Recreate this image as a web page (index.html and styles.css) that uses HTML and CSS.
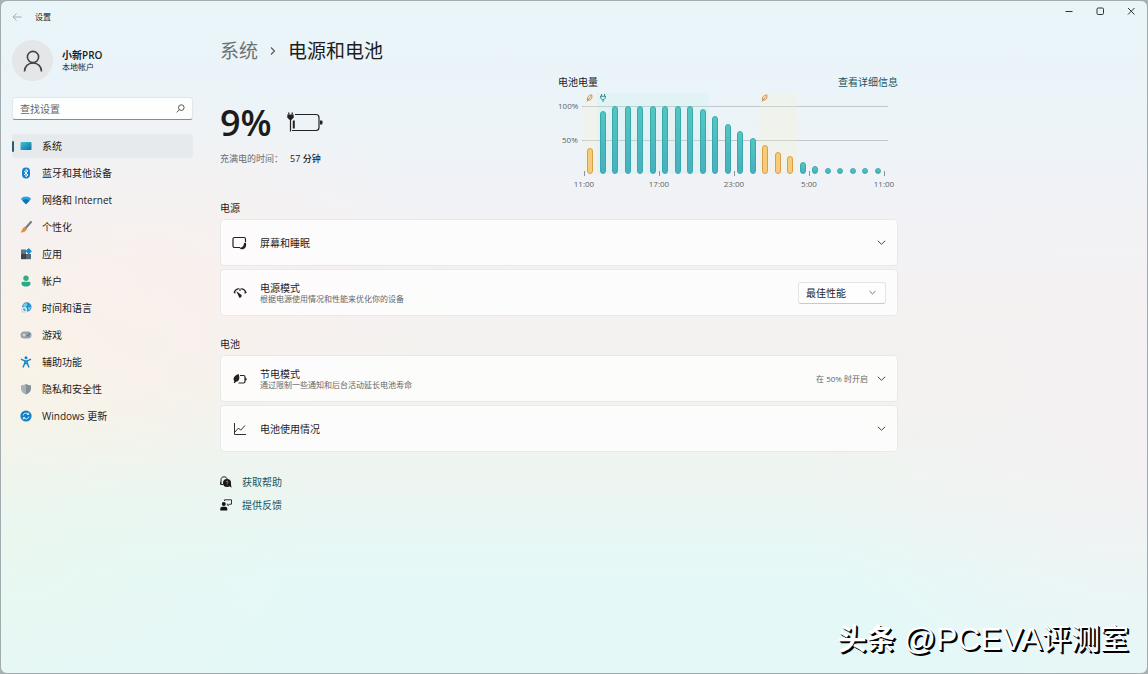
FILE: index.html
```html
<!DOCTYPE html>
<html lang="zh-CN">
<head>
<meta charset="utf-8">
<meta name="viewport" content="width=device-width, initial-scale=1">
<title>设置</title>
<link rel="stylesheet" href="styles.css">
</head>
<body>
<div class="window">
  <header class="titlebar">
    <button class="back" type="button" aria-label="返回"><svg width="10" height="10" viewBox="0 0 10 10" fill="none" stroke="currentColor"><path d="M9.5 5H1M4.5 1.5L1 5l3.5 3.5"/></svg></button>
    <span class="app-name">设置</span>
    <div class="caption">
      <button type="button" aria-label="最小化"><svg width="8" height="8" viewBox="0 0 8 8" fill="none" stroke="currentColor"><path d="M.5 4.5h7"/></svg></button>
      <button type="button" aria-label="最大化"><svg width="8" height="8" viewBox="0 0 8 8" fill="none" stroke="currentColor"><rect x="1" y="1" width="6.5" height="6.5" rx="1.2"/></svg></button>
      <button type="button" aria-label="关闭"><svg width="8" height="8" viewBox="0 0 8 8" fill="none" stroke="currentColor"><path d="M1 1l6.5 6.5M7.5 1L1 7.5"/></svg></button>
    </div>
  </header>

  <div class="body">
    <aside class="sidebar">
      <div class="account">
        <span class="avatar"><svg width="20" height="22" viewBox="0 0 20 22" fill="none" stroke="#444" stroke-width="1.6"><circle cx="10" cy="7" r="5.6"/><path d="M1.5 21.5c0-5 3.5-8.5 8.500-8.500s8.500 3.500 8.500 8.500"/></svg></span>
        <div class="account-text">
          <strong>小新PRO</strong>
          <span>本地帐户</span>
        </div>
      </div>
      <label class="search">
        <input type="search" placeholder="查找设置" aria-label="查找设置">
        <svg width="9" height="9" viewBox="0 0 9 9" fill="none" stroke="#555"><circle cx="5.300" cy="3.600" r="2.800"/><path d="M3.300 5.700L.7 8.400"/></svg>
      </label>
      <nav class="nav">
        <a class="nav-item active" href="#system"><svg width="12" height="12" viewBox="0 0 12 12"><defs><linearGradient id="gs" x1="0" y1="0" x2="1" y2="1"><stop offset="0" stop-color="#3cc6dc"/><stop offset="1" stop-color="#126ca0"/></linearGradient></defs><rect x=".5" y="2" width="11" height="8" rx="1" fill="url(#gs)"/></svg>系统</a>
        <a class="nav-item" href="#bluetooth"><svg width="12" height="12" viewBox="0 0 12 12"><rect x="2" y=".5" width="8" height="11" rx="4" fill="#1580cc"/><path d="M4 4l4 4-2 1.800V2.200L8 4 4 8" fill="none" stroke="#fff" stroke-width=".9"/></svg>蓝牙和其他设备</a>
        <a class="nav-item" href="#network"><svg width="12" height="12" viewBox="0 0 12 12"><path d="M6 10.300L.8 5C3.700 1.800 8.300 1.800 11.200 5z" fill="#25a6dd"/><path d="M6 10.300L2.500 6.700C4.500 4.800 7.500 4.800 9.500 6.700z" fill="#126fb1"/></svg>网络和 Internet</a>
        <a class="nav-item" href="#personal"><svg width="12" height="12" viewBox="0 0 12 12"><path d="M11 1L5.700 7" stroke="#6d7c88" stroke-width="2" stroke-linecap="round"/><path d="M4.800 5.700l2.200 2c-.8 2.500-3 4-6.500 3.800C2.300 9.800 2 6.800 4.800 5.700z" fill="#e0903c"/></svg>个性化</a>
        <a class="nav-item" href="#apps"><svg width="12" height="12" viewBox="0 0 12 12"><path d="M1 1.500h5V6H1z" fill="#65737e"/><path d="M1 6h5v5.200H1z" fill="#384651"/><path d="M6 6h5v5.200H6z" fill="#5a6873"/><path d="M8.700.5l2.700 2.700-2.700 2.700L6 3.200z" fill="#178bd2" stroke="#178bd2"/></svg>应用</a>
        <a class="nav-item" href="#accounts"><svg width="12" height="12" viewBox="0 0 12 12"><circle cx="6" cy="3.200" r="2.700" fill="#2fae83"/><path d="M1.500 8a1.300 1.300 0 011.300-1.300h6.400A1.300 1.300 0 0110.500 8v.8c0 1.900-2 2.800-4.500 2.800s-4.500-.9-4.500-2.800z" fill="#2aa88a"/></svg>帐户</a>
        <a class="nav-item" href="#time"><svg width="12" height="12" viewBox="0 0 12 12"><circle cx="6.800" cy="5" r="4.700" fill="#2391cf"/><path d="M3 3l3-2.200 1.500 2L5 5.500zM8 5l3 .5-2 3.300z" fill="#72d2ec"/><circle cx="4" cy="8" r="3.200" fill="#d9e4ec"/><path d="M4 6.300v1.900h1.500" stroke="#39749e" fill="none"/></svg>时间和语言</a>
        <a class="nav-item" href="#gaming"><svg width="12" height="12" viewBox="0 0 12 12"><rect x=".5" y="2.500" width="11" height="7" rx="3.500" fill="#98a2ab"/><path d="M2.500 6h3M4 4.500v3" stroke="#dfe4e8"/><circle cx="7.700" cy="6.700" r=".8" fill="#4c5966"/><circle cx="9.200" cy="5.200" r=".8" fill="#4c5966"/></svg>游戏</a>
        <a class="nav-item" href="#access"><svg width="12" height="12" viewBox="0 0 12 12"><circle cx="6" cy="1.800" r="1.500" fill="#1384c5"/><path d="M1.500 3.300L4.800 5v2L3.200 11M10.500 3.300L7.200 5v2l1.600 4M5 5h2v2.500H5z" fill="none" stroke="#1384c5" stroke-width="1.400" stroke-linecap="round"/></svg>辅助功能</a>
        <a class="nav-item" href="#privacy"><svg width="12" height="12" viewBox="0 0 12 12"><path d="M6 .7c1.500 1 3 1.500 5 1.500v3.500c0 2.800-2.200 4.700-5 5.800z" fill="#858f98"/><path d="M6 .7C4.500 1.700 3 2.200 1 2.200v3.500c0 2.800 2.200 4.700 5 5.800z" fill="#a8b0b7"/></svg>隐私和安全性</a>
        <a class="nav-item" href="#update"><svg width="12" height="12" viewBox="0 0 12 12"><circle cx="6" cy="6" r="5.600" fill="#147fc5"/><path d="M3 5.500a3 3 0 015.300-1.300M9 6.500a3 3 0 01-5.300 1.300M8.700 2.500v2H6.800M3.300 9.500v-2h1.900" fill="none" stroke="#d9f3ff" stroke-width=".9"/></svg>Windows 更新</a>
      </nav>
    </aside>

    <main class="main">
      <h1 class="crumbs"><a href="#system">系统</a><svg width="6" height="10" viewBox="0 0 6 10" fill="none" stroke="#555" stroke-width="1.100"><path d="M1 1.500L4.500 5 1 8.500"/></svg><span>电源和电池</span></h1>

      <section class="hero">
        <div class="status">
          <div class="level"><span>9%</span>
            <svg width="36" height="22" viewBox="0 0 36 22"><path d="M8 2.500h21a3 3 0 013 3v10a3 3 0 01-3 3H5" fill="none" stroke="#222" stroke-width="1.200"/><path d="M33 8.500h1.500a1 1 0 011 1v2a1 1 0 01-1 1H33z" fill="#222"/><path d="M1.800.5v2M5.200.5v2" stroke="#222" stroke-width="1.300"/><path d="M.3 2.500h6.400v2.700L4.800 7.700H2.200L.3 5.200z" fill="#222"/><path d="M3.500 7v12.500" stroke="#222" stroke-width="1.200"/><path d="M5.800 8.500h2v8h-2z" fill="#222"/></svg>
          </div>
          <p class="remaining">充满电的时间：<b>57 分钟</b></p>
        </div>
        <div class="chart">
          <div class="chart-head"><span>电池电量</span><a href="#details">查看详细信息</a></div>
          <div class="plot">
            <span class="grid-line full">100%</span>
            <span class="grid-line half">50%</span>
            <div class="bars">
              <div class="slot saver"><svg class="mark" width="8" height="8" viewBox="0 0 8 8" fill="none" stroke="#c87f35" stroke-width=".9"><path d="M1 7.500l1-1.700M1.800 6C.5 3 3 1.500 5.700.8c.6 2.800.2 5.600-3.900 5.200L5 2.500"/></svg><i style="height:38%"></i></div>
              <div class="slot charge"><svg class="mark" width="8" height="8" viewBox="0 0 8 8" fill="none" stroke="#23858d" stroke-width=".9"><path d="M2.500 0v2M5.500 0v2M1 2.300h6M1.700 2.500v1.800L4 6l2.300-1.700V2.500M4 6v2"/></svg><i style="height:93%"></i></div>
              <div class="slot charge"><i style="height:100%"></i></div>
              <div class="slot charge"><i style="height:100%"></i></div>
              <div class="slot charge"><i style="height:100%"></i></div>
              <div class="slot charge"><i style="height:100%"></i></div>
              <div class="slot charge"><i style="height:100%"></i></div>
              <div class="slot charge"><i style="height:100%"></i></div>
              <div class="slot charge"><i style="height:100%"></i></div>
              <div class="slot charge"><i style="height:96%"></i></div>
              <div class="slot"><i style="height:85%"></i></div>
              <div class="slot"><i style="height:73%"></i></div>
              <div class="slot"><i style="height:63%"></i></div>
              <div class="slot"><i style="height:53%"></i></div>
              <div class="slot saver"><svg class="mark" width="8" height="8" viewBox="0 0 8 8" fill="none" stroke="#c87f35" stroke-width=".9"><path d="M1 7.500l1-1.700M1.800 6C.5 3 3 1.500 5.700.8c.6 2.800.2 5.600-3.900 5.200L5 2.500"/></svg><i style="height:42%"></i></div>
              <div class="slot saver"><i style="height:33%"></i></div>
              <div class="slot saver"><i style="height:27%"></i></div>
              <div class="slot"><i style="height:18%"></i></div>
              <div class="slot"><i style="height:12%"></i></div>
              <div class="slot"><i style="height:9%"></i></div>
              <div class="slot"><i style="height:9%"></i></div>
              <div class="slot"><i style="height:9%"></i></div>
              <div class="slot"><i style="height:9%"></i></div>
              <div class="slot"><i style="height:9%"></i></div>
            </div>
          </div>
          <div class="hours"><span>11:00</span><span>17:00</span><span>23:00</span><span>5:00</span><span>11:00</span></div>
        </div>
      </section>

      <section class="group">
        <h2>电源</h2>
        <button class="card" type="button">
          <svg class="card-icon" width="16" height="16" viewBox="0 0 16 16"><path d="M8 12.500H2.500A1.500 1.500 0 011 11V4a1.500 1.500 0 011.500-1.500H12A1.500 1.500 0 0113.500 4v3" fill="none" stroke="#222" stroke-width="1.200"/><path d="M13.800 7.500c1.200 3.500-.5 6.800-3.800 6.800-1.300 0-2.200-.6-2.700-1.500 3-.1 4.700-1.600 4.700-4.800z" fill="#222"/></svg>
          <span class="card-text">屏幕和睡眠</span>
          <svg class="chev" width="9" height="9" viewBox="0 0 9 9"><path d="M.8 2.700l3.700 3.600 3.700-3.600"/></svg>
        </button>
        <div class="card">
          <svg class="card-icon" width="16" height="16" viewBox="0 0 16 16"><path d="M2 7.500C3.200 5 5 3.900 6.800 3.700M9.200 3.700c2 .3 3.800 1.500 4.800 3.800l-1.600.6M2 7.500l1.500.6M8 3.500V6" fill="none" stroke="#222" stroke-width="1.200"/><path d="M4.300 5.900l5.200 4.200a1.700 1.700 0 01-2.300 2.300z" fill="#222"/></svg>
          <label class="card-text" for="mode">电源模式<small>根据电源使用情况和性能来优化你的设备</small></label>
          <span class="picker"><select id="mode"><option>最佳性能</option><option>平衡</option><option>最佳能效</option></select><svg class="chev" width="7" height="7" viewBox="0 0 9 9"><path d="M.8 2.700l3.700 3.600 3.700-3.600"/></svg></span>
        </div>
      </section>

      <section class="group">
        <h2>电池</h2>
        <button class="card" type="button">
          <svg class="card-icon" width="16" height="16" viewBox="0 0 16 16"><path d="M8 4.500h3.500A1.500 1.500 0 0113 6v4.500a1.500 1.500 0 01-1.500 1.500H6.500M14 7.300v2" fill="none" stroke="#222" stroke-width="1.200"/><path d="M6.700 3C8 7 7.500 10.700 4 10.700l-1.300 1.500-1-.7.600-1.200C.2 7 2.800 4.300 6.700 3z" fill="#222"/></svg>
          <span class="card-text">节电模式<small>通过限制一些通知和后台活动延长电池寿命</small></span>
          <span class="value">在 50% 时开启</span>
          <svg class="chev" width="9" height="9" viewBox="0 0 9 9"><path d="M.8 2.700l3.700 3.600 3.700-3.600"/></svg>
        </button>
        <button class="card" type="button">
          <svg class="card-icon" width="16" height="16" viewBox="0 0 16 16" fill="none" stroke="#333"><path d="M2.500 2v11.500H14M3 11l3.500-4 2.200 2.200L13 4.500"/></svg>
          <span class="card-text">电池使用情况</span>
          <svg class="chev" width="9" height="9" viewBox="0 0 9 9"><path d="M.8 2.700l3.700 3.600 3.700-3.600"/></svg>
        </button>
      </section>

      <div class="links">
        <a href="#help"><svg width="12" height="12" viewBox="0 0 12 12"><path d="M1 8.300V3.800C1 1.800 2.300.8 4 .8s3 .8 3 2.500M.6 6v2.500H3" fill="none" stroke="#222"/><circle cx="7" cy="7" r="4" fill="#151515"/><path d="M8 9l3.500 2.700L10.800 7z" fill="#151515"/><path d="M5.900 6c.2-1.300 2.300-1.200 2.200.1 0 .8-1.100.8-1.100 1.700M7 8.500v.8" fill="none" stroke="#bbb" stroke-width=".7"/></svg>获取帮助</a>
        <a href="#feedback"><svg width="12" height="12" viewBox="0 0 12 12"><circle cx="3.800" cy="5" r="2" fill="#151515"/><path d="M.3 11.500V9.800c0-1.300.8-2 2-2h3c1.200 0 2 .7 2 2v1.700z" fill="#151515"/><path d="M4.500 2V.8h7v4.400H9.500L8 6.800V5.200H6.800" fill="none" stroke="#333"/></svg>提供反馈</a>
      </div>
    </main>
  </div>

  <div class="watermark"><b>头条</b><span><span class="latin">@PCEVA</span>评测室</span></div>
</div>
</body>
</html>
```

FILE: styles.css
```css
* { box-sizing: border-box; }

body {
  margin: 0;
  background: #a9b0b2;
  color: #1c1c1c;
  font: 10px/12px "Open Sans", "Noto Sans CJK SC", sans-serif;
}

a { color: inherit; text-decoration: none; }
button, input, select { font: inherit; color: inherit; }
svg { flex: none; }

.window {
  position: relative;
  display: flex;
  flex-direction: column;
  min-height: 100vh;
  border: 1px solid #a3adb0;
  border-radius: 7px;
  background:
    radial-gradient(ellipse 26% 30% at 13% 42%, rgba(250, 240, 235, .8), rgba(250, 240, 235, 0)),
    radial-gradient(ellipse 22% 22% at 0% 54%, rgba(249, 244, 228, .9), rgba(249, 244, 228, 0)),
    radial-gradient(ellipse 28% 28% at 0% 82%, rgba(234, 247, 238, .8), rgba(234, 247, 238, 0)),
    radial-gradient(ellipse 30% 40% at 100% 66%, rgba(244, 241, 243, 1), rgba(244, 241, 243, 0)),
    linear-gradient(#e9f5f8 0%, #ebf4f8 15%, #f1f2f6 30%, #f4f1f1 46%, #f3f2ee 58%, #edf5f1 72%, #e4f9f7 86%, #e4f8f7 100%);
}

/* Title bar */
.titlebar { display: flex; align-items: center; height: 32px; padding: 0 1px 0 8px; }
.back, .caption button {
  display: grid;
  place-items: center;
  padding: 0;
  border: 0;
  background: none;
}
.back { width: 16px; height: 16px; color: #a4abae; }
.app-name { margin-left: 10px; font-size: 8px; }
.caption { display: flex; align-self: flex-start; margin-left: auto; }
.caption button { width: 31px; height: 20px; color: #333; }

.body { display: flex; gap: 27px; padding-left: 11px; }

/* Sidebar */
.sidebar { flex: none; width: 181px; padding-top: 7px; }
.account { display: flex; align-items: center; gap: 9px; }
.avatar {
  display: grid;
  place-items: center;
  width: 41px;
  height: 41px;
  border-radius: 50%;
  background: #e4e6e7;
}
.account-text { display: flex; flex-direction: column; font-size: 8px; line-height: 11px; }
.account-text strong { font-size: 10px; font-weight: 600; }
.search {
  display: flex;
  align-items: center;
  height: 23px;
  margin-top: 16px;
  padding: 0 7px;
  border: 1px solid #e2e8ea;
  border-bottom-color: #868c8e;
  border-radius: 3px;
  background: #fdfefe;
}
.search input {
  flex: 1;
  min-width: 0;
  padding: 0;
  border: 0;
  outline: 0;
  background: none;
  appearance: none;
}
.search input::placeholder { color: #666; opacity: 1; }
.nav { display: flex; flex-direction: column; gap: 3px; margin-top: 14px; }
.nav-item {
  position: relative;
  display: flex;
  align-items: center;
  gap: 10px;
  height: 24px;
  padding-left: 8px;
  border-radius: 3px;
}
.nav-item.active { background: #e7eaec; }
.nav-item.active::before {
  content: "";
  position: absolute;
  left: 0;
  width: 2px;
  height: 11px;
  border-radius: 1px;
  background: #225f70;
}

/* Main column */
.main { flex: 0 1 678px; min-width: 0; padding-top: 6px; }
.crumbs {
  display: flex;
  align-items: center;
  gap: 12px;
  margin: 0;
  font-size: 19px;
  line-height: 24px;
  font-weight: 400;
}
.crumbs a { color: #6b7275; }

.hero { display: flex; justify-content: space-between; gap: 24px; margin-top: 13px; }
.status { padding-top: 27px; }
.level {
  display: flex;
  align-items: center;
  gap: 15px;
  font-size: 36px;
  line-height: 40px;
  font-weight: 600;
}
.remaining { display: flex; gap: 7px; margin: 10px 0 0; font-size: 9px; color: #686d70; }
.remaining b { color: #1c1c1c; font-weight: 500; }

/* Battery chart */
.chart { flex: 0 1 340px; }
.chart-head { display: flex; justify-content: space-between; }
.chart-head a, .links a { color: #215561; }
.plot { position: relative; height: 81px; margin-top: 5px; padding: 0 14px 0 26px; }
.grid-line {
  position: absolute;
  left: 0;
  right: 10px;
  display: flex;
  align-items: center;
  gap: 4px;
  height: 12px;
  font-size: 8px;
  color: #5d6466;
}
.grid-line::after { content: ""; flex: 1; height: 1px; background: #bcc8cb; }
.grid-line.full { top: 7px; }
.grid-line.half { top: 41px; padding-left: 4px; }
.bars { position: relative; display: flex; height: 100%; }
.slot {
  position: relative;
  display: flex;
  flex: 1;
  align-items: flex-end;
  justify-content: center;
  padding-top: 13px;
}
.slot i {
  width: 6px;
  border: 1px solid #3aa9ad;
  border-radius: 3px;
  background: linear-gradient(#50c8c2, #48afc0);
}
.slot.charge { background: rgba(196, 240, 234, .25); }
.slot.saver { background: rgba(250, 240, 205, .25); }
.slot.saver i { border-color: #d9a147; background: #f6cb79; }
.mark { position: absolute; top: 1px; }
.hours {
  position: relative;
  display: flex;
  justify-content: space-between;
  margin: -3px 2px 0 14px;
  font-size: 8px;
  color: #5d6466;
}
.hours span { display: flex; flex-direction: column; align-items: center; gap: 2px; width: 24px; }
.hours span::before { content: ""; width: 1px; height: 5px; background: #8c9496; }

/* Setting cards */
.group { display: flex; flex-direction: column; gap: 3px; margin-top: 12px; }
.group + .group { margin-top: 22px; }
.group h2 { margin: 0 0 2px; font-size: 10px; line-height: 12px; font-weight: 400; }
.card {
  display: flex;
  align-items: center;
  gap: 12px;
  width: 100%;
  height: 47px;
  padding: 0 11px;
  border: 1px solid #e8eaea;
  border-radius: 4px;
  background: rgba(255, 255, 255, .75);
  text-align: left;
}
.card-text { flex: 1; }
.card-text small { display: block; font-size: 8px; line-height: 10px; color: #62676a; }
.value { font-size: 8px; color: #62676a; }
.value + .chev { margin-left: -3px; }
.chev { fill: none; stroke: #444; }
.picker { position: relative; display: flex; align-items: center; }
.picker select {
  appearance: none;
  width: 88px;
  height: 22px;
  padding: 0 20px 0 7px;
  border: 1px solid #e3e4e4;
  border-bottom-color: #c9cbcb;
  border-radius: 3px;
  background: #fefefe;
}
.picker .chev { position: absolute; right: 10px; pointer-events: none; }

.links { display: flex; flex-direction: column; align-items: flex-start; gap: 11px; margin-top: 24px; }
.links a { display: flex; align-items: center; gap: 10px; }

.watermark {
  position: absolute;
  right: 18px;
  bottom: 14px;
  display: flex;
  align-items: center;
  gap: 8px;
  color: #fff;
  font-size: 29px;
  line-height: 40px;
  text-shadow: 1px 1px 0 #000, 2px 2px 0 #000;
}
.watermark .latin { font-family: "Liberation Sans", sans-serif; font-size: 32px; }
```
